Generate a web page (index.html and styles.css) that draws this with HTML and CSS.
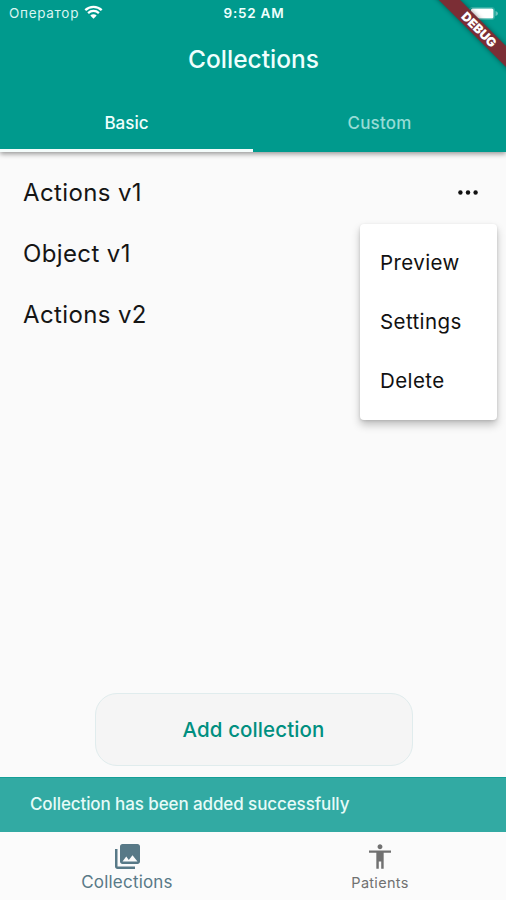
FILE: index.html
```html
<!DOCTYPE html>
<html lang="en">
<head>
<meta charset="utf-8">
<title>Collections</title>
<link rel="stylesheet" href="styles.css">
</head>
<body>
<div class="app">
  <header class="header">
    <div class="status">
      <div class="carrier"><span class="carrier-name">Оператор</span>
        <svg class="wifi" viewBox="0 0 19 14" width="19" height="14"><path d="M1.300 5.200a11.800 11.800 0 0 1 16.400 0M4.100 8.100a7.800 7.800 0 0 1 10.800 0" fill="none" stroke="currentColor" stroke-width="2.300"/><path d="M6.300 10.500a4.600 4.600 0 0 1 6.400 0L9.500 13.700z" fill="currentColor"/></svg>
      </div>
      <div class="time">9:52 AM</div>
      <div class="power"><svg viewBox="0 0 30 13" width="30" height="13"><rect x=".5" y=".5" width="25" height="12" rx="2.500" fill="none" stroke="#fff" stroke-opacity=".2"/><rect x="2" y="1.500" width="22.500" height="10" rx="1.500" fill="#fff"/><path d="M26.500 4q2.500 .6 2.500 2.500t-2.500 2.500z" fill="#fff" opacity=".4"/></svg></div>
    </div>
    <h1 class="title">Collections</h1>
    <nav class="tabs">
      <div class="tab active"><span>Basic</span></div>
      <div class="tab"><span>Custom</span></div>
    </nav>
    <div class="ribbon-corner"><div class="ribbon"><span>DEBUG</span></div></div>
  </header>
  <main class="content">
    <div class="row"><span class="name">Actions v1</span>
      <svg class="more" viewBox="0 0 20 6" width="20" height="6"><circle cx="2.400" cy="2.500" r="2.200"/><circle cx="10" cy="2.500" r="2.200"/><circle cx="17.600" cy="2.500" r="2.200"/></svg>
    </div>
    <div class="row"><span class="name">Object v1</span></div>
    <div class="row"><span class="name">Actions v2</span></div>
    <div class="menu">
      <div class="item"><span>Preview</span></div>
      <div class="item"><span>Settings</span></div>
      <div class="item"><span>Delete</span></div>
    </div>
    <button class="add"><span>Add collection</span></button>
  </main>
  <div class="snackbar"><span>Collection has been added successfully</span></div>
  <footer class="bottom">
    <div class="dest selected">
      <svg viewBox="2 2 20 20" width="25" height="25"><path fill="currentColor" d="M22 16V4c0-1.100-.9-2-2-2H8c-1.100 0-2 .9-2 2v12c0 1.100.9 2 2 2h12c1.100 0 2-.9 2-2zm-11-4 2.030 2.710L16 11l4 5H8l3-4zM2 6v14c0 1.100.9 2 2 2h14v-2H4V6H2z"/></svg>
      <span>Collections</span>
    </div>
    <div class="dest">
      <svg viewBox="3 2 18 20" width="22" height="25"><path fill="currentColor" d="M12 2c1.100 0 2 .9 2 2s-.9 2-2 2-2-.9-2-2 .9-2 2-2zm9 7h-6v13h-2v-6h-2v6H9V9H3V7h18v2z"/></svg>
      <span>Patients</span>
    </div>
  </footer>
</div>
</body>
</html>
```
FILE: styles.css
```css
* { box-sizing: border-box; }
body { margin: 0; font-family: Inter, "Liberation Sans", sans-serif; }
.app { width: 506px; height: 900px; display: flex; flex-direction: column; overflow: hidden; background: #fafafa; }
.header { position: relative; z-index: 2; flex: none; height: 152px; display: flex; flex-direction: column; background: #009a8d; color: #effffd; box-shadow: 0 2px 5px rgba(0,0,0,.4); }
.status { height: 27px; display: grid; grid-template-columns: 1fr 1fr 1fr; align-items: center; padding: 0 7px 0 9px; font-size: 13px; line-height: 27px; }
.carrier { display: flex; align-items: center; gap: 5px; color: #d9f5f1; font-size: 13.500px; letter-spacing: .7px; }
.wifi { color: #fff; margin-top: -3px; }
.time { text-align: center; font-weight: 600; font-size: 13.500px; letter-spacing: .75px; }
.power { display: flex; justify-content: flex-end; }
.title { margin: 13px 0 0; height: 40px; line-height: 38px; font-size: 24.500px; font-weight: 500; text-align: center; padding-left: 1px; }
.tabs { margin-top: auto; height: 59px; display: flex; font-size: 17px; font-weight: 500; }
.tab { flex: 1; text-align: center; line-height: 61px; height: 59px; color: #96dcd5; border-bottom: 3px solid transparent; letter-spacing: .2px; }
.tab.active { color: #effffd; border-bottom-color: #f4fcfb; letter-spacing: 0; }
.ribbon-corner { position: absolute; top: 0; right: 0; width: 90px; height: 80px; overflow: hidden; }
.ribbon { position: absolute; left: 3px; top: 22px; width: 120px; height: 15px; line-height: 15px; text-align: center; transform: rotate(45deg); background: #7b2e35; box-shadow: 0 0 5px rgba(0,0,0,.45); color: #fff; font-size: 12.500px; font-weight: 900; }
.content { position: relative; flex: 1; display: flex; flex-direction: column; padding: 10px 28px 11px 23px; }
.row { height: 61px; display: flex; align-items: center; justify-content: space-between; font-size: 24px; color: #151515; letter-spacing: .38px; }
.more { fill: #111; }
.menu { position: absolute; top: 72px; right: 9px; width: 137px; height: 196px; padding: 9px 20px; border-radius: 4px; background: #fff; box-shadow: 0 5px 8px rgba(0,0,0,.23), 0 1px 3px rgba(0,0,0,.12); }
.item { height: 59px; line-height: 59px; font-size: 20.500px; letter-spacing: .4px; color: #111; }
.add { align-self: center; margin: auto 0 0 6px; width: 318px; height: 73px; border: 1px solid #e0eced; border-radius: 22px; background: #f5f5f5; color: #008f80; font: 500 20.500px Inter, "Liberation Sans", sans-serif; letter-spacing: .1px; padding-bottom: 2px; }
.snackbar { flex: none; height: 55px; padding-left: 30px; line-height: 53px; background: #32aaa3; border-top: 1px solid #169f97; color: #e6fbf8; font-size: 17px; font-weight: 500; letter-spacing: -.1px; }
.bottom { flex: none; height: 68px; display: flex; background: #fbfbfb; }
.dest { flex: 1; display: flex; flex-direction: column; align-items: center; padding: 12px 0 0 1px; color: #717171; font-size: 14.500px; letter-spacing: .3px; }
.dest span { margin-top: 4px; line-height: 20px; }
.selected { color: #587987; font-size: 17px; letter-spacing: .2px; }
.selected span { margin-top: 3px; }
```
